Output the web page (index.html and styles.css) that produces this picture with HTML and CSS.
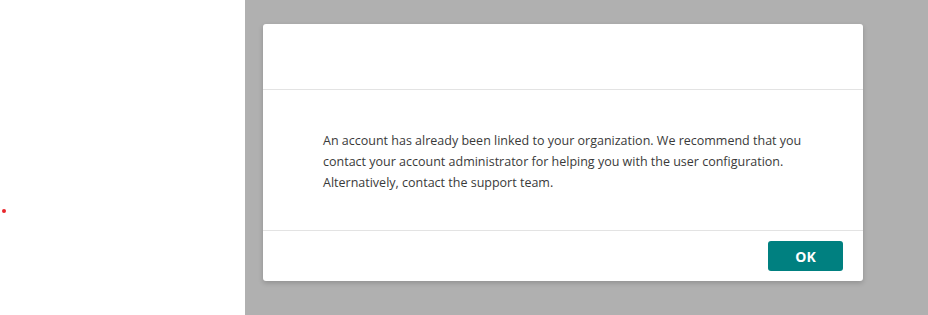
FILE: index.html
```html
<!DOCTYPE html>
<html>
<head>
<meta charset="utf-8">
<link rel="stylesheet" href="styles.css">
</head>
<body>
<div class="page">
  <aside class="side"><span class="dot"></span></aside>
  <main class="overlay">
    <div class="dialog">
      <div class="dialog-header"></div>
      <div class="dialog-body">
        <p>An account has already been linked to your organization. We recommend that you contact your account administrator for helping you with the user configuration. Alternatively, contact the support team.</p>
      </div>
      <div class="dialog-footer">
        <button class="btn-ok">OK</button>
      </div>
    </div>
  </main>
</div>
</body>
</html>
```
FILE: styles.css
```css
html, body {
  margin: 0;
  padding: 0;
  height: 100%;
}
body {
  font-family: "Open Sans", "Noto Sans", sans-serif;
  background: #ffffff;
}
.page {
  display: flex;
  height: 315px;
}
.side {
  width: 245px;
  flex: none;
  background: #ffffff;
  display: flex;
  flex-direction: column;
  padding-top: 209px;
  box-sizing: border-box;
}
.dot {
  display: block;
  width: 4px;
  height: 4px;
  margin-left: 2px;
  border-radius: 50%;
  background: #e8262b;
}
.overlay {
  flex: 1;
  background: #b0b0b0;
  padding: 24px 0 0 18px;
  box-sizing: border-box;
}
.dialog {
  width: 600px;
  background: #ffffff;
  border-radius: 3px;
  box-shadow: 0 2px 5px rgba(0, 0, 0, 0.18);
  display: flex;
  flex-direction: column;
}
.dialog-header {
  height: 65px;
  border-bottom: 1px solid #e3e3e3;
}
.dialog-body {
  height: 141px;
  box-sizing: border-box;
  padding: 40px 60px 0 60px;
  border-bottom: 1px solid #e3e3e3;
}
.dialog-body p {
  margin: 0;
  font-size: 12.5px;
  line-height: 21px;
  color: #3a3a3a;
}
.dialog-footer {
  height: 50px;
  display: flex;
  justify-content: flex-end;
  align-items: center;
  padding-right: 20px;
}
.btn-ok {
  width: 75px;
  height: 30px;
  border: none;
  border-radius: 3px;
  background: #008080;
  color: #ffffff;
  font-family: "Open Sans", "Noto Sans", sans-serif;
  font-weight: 700;
  font-size: 14px;
  cursor: pointer;
}
```
